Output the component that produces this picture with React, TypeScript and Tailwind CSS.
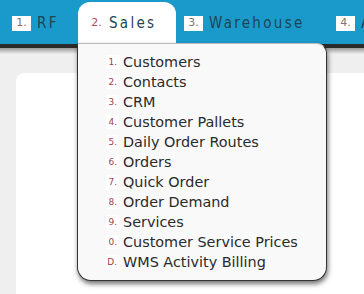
import React from 'react';

const tabs = [
  { n: '1.', label: 'RF', w: 'w-[78px]', pl: 'pl-[12px]' },
  { n: '2.', label: 'Sales', w: 'w-[98px]', pl: 'pl-[9px]', active: true },
  { n: '3.', label: 'Warehouse', w: 'w-[148px]', pl: 'pl-[8px]' },
  { n: '4.', label: 'Admin', w: 'w-[120px]', pl: 'pl-[12px]' },
];

const items = [
  ['1.', 'Customers'],
  ['2.', 'Contacts'],
  ['3.', 'CRM'],
  ['4.', 'Customer Pallets'],
  ['5.', 'Daily Order Routes'],
  ['6.', 'Orders'],
  ['7.', 'Quick Order'],
  ['8.', 'Order Demand'],
  ['9.', 'Services'],
  ['0.', 'Customer Service Prices'],
  ['D.', 'WMS Activity Billing'],
];

export default function App() {
  return (
    <div className="relative w-[364px] h-[294px] overflow-hidden bg-[#efefef] font-['DejaVu_Sans',sans-serif]">
      {/* top nav */}
      <div className="flex h-[44px] bg-[#1a9acb] pt-[2px] whitespace-nowrap overflow-hidden">
        {tabs.map((t) => (
          <div
            key={t.label}
            className={`${t.w} ${t.pl} shrink-0 flex items-center ${
              t.active ? 'gap-[3px] bg-white rounded-t-[12px]' : 'gap-[6px]'
            }`}
          >
            <span
              className={`flex items-center justify-center w-[19px] h-[15px] text-[11px] ${
                t.active ? 'text-[#b04a5a]' : 'bg-white text-[#777]'
              }`}
            >
              {t.n}
            </span>
            <span className="text-[15px] tracking-[2.3px] text-[#1d4557] font-['DejaVu_Sans_Condensed','DejaVu_Sans',sans-serif]">
              {t.label}
            </span>
          </div>
        ))}
      </div>
      <div className="h-[4px] bg-[#2b2b2b]" />
      <div className="h-[6px] bg-gradient-to-b from-[#9a9a9a] to-[#efefef]" />

      {/* page body */}
      <div className="pl-[16px] pt-[19px]">
        <div className="h-[260px] bg-white rounded-tl-[8px]" />
      </div>

      {/* dropdown */}
      <div className="absolute left-[77px] top-[43px] w-[250px] h-[238px] bg-[#f9f9f9] border border-[#333] border-t-[#bbb] rounded-b-[14px] rounded-tr-[10px] shadow-[1px_3px_5px_rgba(0,0,0,0.55)] pt-[8px]">
        {items.map(([n, label]) => (
          <div key={label} className="flex items-center h-[20px]">
            <span className="w-[45px] flex justify-end pr-[4px]">
              <span className="bg-white px-[2px] text-[9px] text-[#a0404f] leading-[14px]">{n}</span>
            </span>
            <span className="text-[14.4px] text-[#2a2a2a] leading-[20px]">{label}</span>
          </div>
        ))}
      </div>
    </div>
  );
}
